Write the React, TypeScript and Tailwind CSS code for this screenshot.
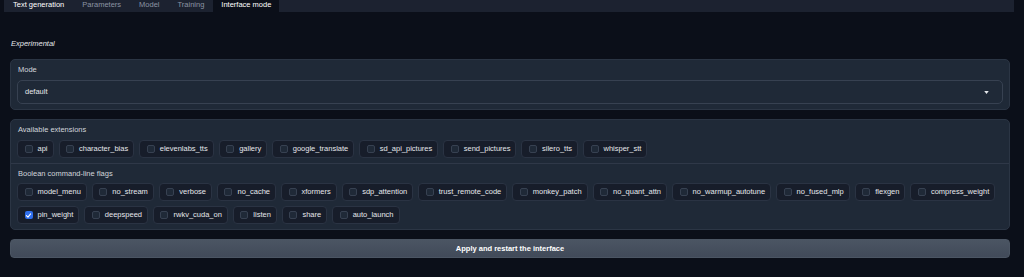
import React from 'react';

const extensions = [
  'api',
  'character_bias',
  'elevenlabs_tts',
  'gallery',
  'google_translate',
  'sd_api_pictures',
  'send_pictures',
  'silero_tts',
  'whisper_stt',
];

const flags = [
  'model_menu',
  'no_stream',
  'verbose',
  'no_cache',
  'xformers',
  'sdp_attention',
  'trust_remote_code',
  'monkey_patch',
  'no_quant_attn',
  'no_warmup_autotune',
  'no_fused_mlp',
  'flexgen',
  'compress_weight',
  'pin_weight',
  'deepspeed',
  'rwkv_cuda_on',
  'listen',
  'share',
  'auto_launch',
];

const tabs = ['Text generation', 'Parameters', 'Model', 'Training', 'Interface mode'];

function CheckItem({ label, checked }: { label: string; checked?: boolean }) {
  return (
    <label className="flex items-center h-[18px] pl-[6.5px] pr-[5px] gap-[5px] rounded-[4px] border border-[#2a3343] bg-[#171d2a] cursor-pointer">
      {checked ? (
        <span className="w-[8px] h-[8px] rounded-[2px] bg-[#2f6fed] flex items-center justify-center">
          <svg viewBox="0 0 10 10" className="w-[7px] h-[7px]">
            <path d="M2 5.2 L4.2 7.2 L8 2.8" fill="none" stroke="white" strokeWidth="1.6" strokeLinecap="round" strokeLinejoin="round" />
          </svg>
        </span>
      ) : (
        <span className="w-[8px] h-[8px] rounded-[2px] border border-[#374151] bg-[#1f2937]" />
      )}
      <span className="text-[7.5px] leading-[10px] text-[#e5e7eb]">{label}</span>
    </label>
  );
}

export default function App() {
  return (
    <div
      className="w-[1024px] h-[277px] bg-[#0b0f19] overflow-hidden"
      style={{ fontFamily: '"Liberation Sans", Arial, sans-serif' }}
    >
      {/* Tabs */}
      <div className="ml-[4px] mr-[10px] h-[12px] bg-[#1c2230] flex">
        {tabs.map((t) => (
          <div
            key={t}
            className={
              t === 'Interface mode'
                ? 'px-[8px] h-full bg-[#0b0f19] text-white text-[7.5px] leading-[10px]'
                : t === 'Text generation'
                ? 'px-[9px] h-full text-white text-[7.5px] leading-[10px]'
                : 'px-[9px] h-full text-[#8b93a3] text-[7.5px] leading-[10px]'
            }
          >
            {t}
          </div>
        ))}
      </div>

      <div className="pl-[10px] pr-[14px]">
        <p className="mt-[27px] pl-[1px] text-[7.5px] leading-[10px] italic text-[#e5e7eb]">Experimental</p>

        {/* Mode */}
        <div className="mt-[10px] bg-[#1f2937] border border-[#2b3544] rounded-[5px] px-[6px] pt-[5px] pb-[5px]">
          <div className="text-[7.5px] leading-[10px] text-[#d1d5db] pl-[1px]">Mode</div>
          <div className="mt-[5px] h-[24px] border border-[#374151] rounded-[5px] flex items-center justify-between pl-[7px] pr-[13px]">
            <span className="text-[7.5px] text-[#e5e7eb]">default</span>
            <svg viewBox="0 0 6 4" className="w-[5px] h-[3px]">
              <path d="M0 0 L6 0 L3 4 Z" fill="#e5e7eb" />
            </svg>
          </div>
        </div>

        {/* Extensions + flags */}
        <div className="mt-[9px] bg-[#1f2937] border border-[#2b3544] rounded-[5px]">
          <div className="px-[6px] pt-[5px] pb-[5px] border-b border-[#2f3848]">
            <div className="text-[7.5px] leading-[10px] text-[#d1d5db] pl-[1px]">Available extensions</div>
            <div className="mt-[5px] flex flex-wrap gap-[5px]">
              {extensions.map((e) => (
                <CheckItem key={e} label={e} />
              ))}
            </div>
          </div>
          <div className="px-[6px] pt-[5px] pb-[5px]">
            <div className="text-[7.5px] leading-[10px] text-[#d1d5db] pl-[1px]">Boolean command-line flags</div>
            <div className="mt-[4px] flex flex-wrap gap-[5px] w-[980px]">
              {flags.map((f) => (
                <CheckItem key={f} label={f} checked={f === 'pin_weight'} />
              ))}
            </div>
          </div>
        </div>

        <button className="mt-[9px] w-full h-[19px] rounded-[4px] border border-[#4b5563] bg-gradient-to-b from-[#4b5563] to-[#414a59] text-white text-[7.5px] font-bold">
          Apply and restart the interface
        </button>
      </div>
    </div>
  );
}
